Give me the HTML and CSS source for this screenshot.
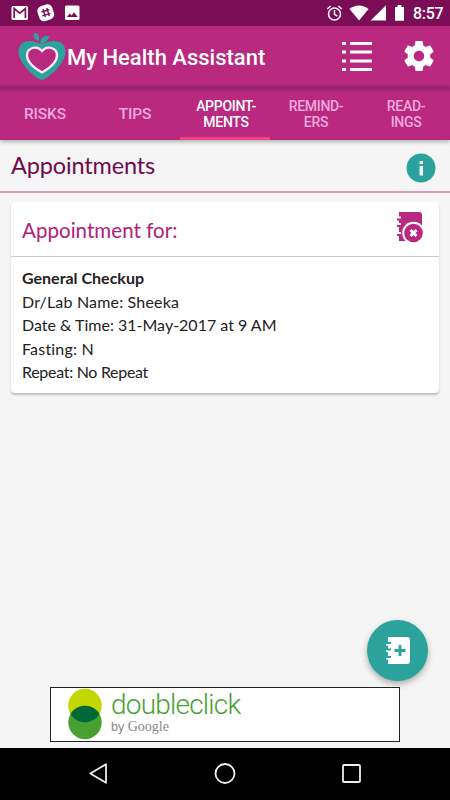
FILE: index.html
```html
<!DOCTYPE html>
<html lang="en">
<head>
<meta charset="utf-8">
<title>My Health Assistant</title>
<link rel="stylesheet" href="styles.css">
</head>
<body>
<div class="screen">
  <header class="status">
    <svg class="status-left" width="80" height="26" viewBox="0 0 80 26">
      <rect x="11.5" y="6" width="16.5" height="14" rx="1.5" fill="#fff"/>
      <path d="M14.2 18V8.5l5.6 4.6 5.6-4.6V18" fill="none" stroke="#7b0d57" stroke-width="1.7"/>
      <rect x="38" y="5" width="15.5" height="15.5" rx="5" fill="#fff" transform="rotate(-18 45.75 12.75)"/>
      <path d="M43 9l2.4 8M46.8 8l2.4 8M41.4 12l8-2.4M42.4 15.8l8-2.4" stroke="#7b0d57" stroke-width="1.4"/>
      <rect x="65" y="5.5" width="14.5" height="14.5" rx="1.5" fill="#fff"/>
      <path d="M67 17l2.8-3.5 1.8 2 2.4-3.2 3.7 4.7z" fill="#7b0d57"/>
    </svg>
    <div class="status-right">
      <svg width="80" height="26" viewBox="0 0 80 26">
        <circle cx="9.5" cy="14" r="6" fill="none" stroke="#fff" stroke-width="1.5"/>
        <path d="M9.500 10v4.300l3 1.800M2.200 9l3.400-3M16.800 9l-3.400-3" fill="none" stroke="#fff" stroke-width="1.400"/>
        <path d="M24.500 9c5.500-4.800 13.500-4.800 19 0L34 20.500z" fill="#fff"/>
        <path d="M61 5.200V20.500H45.700z" fill="#fff"/>
        <path d="M70 7h2.500V5h4v2H79v13.700h-9z" fill="#fff"/>
      </svg>
      <span class="clock">8:57</span>
    </div>
  </header>
  <div class="appbar">
    <svg class="logo" width="48" height="50" viewBox="0 0 48 50">
      <path d="M24 48C20 48 1 33 .5 20 .5 12 6 8.500 13 9c4 .3 7 2 11 3 4-1 7-2.700 11-3 7-.5 12.500 3 12.500 11C47 33 28 48 24 48z" fill="#2ba39c"/>
      <path d="M22 12C22.500 6 25 3.500 31 4 30.500 9 27 11.500 22 12zM20.500 9C16 7.500 14.500 4 16.500 .5c4 1 5.500 4.500 4 8.500z" fill="#2ba39c"/>
      <path d="M24 40.500C16 36 9 30.500 9 23.500c0-8 10-10.500 15-4.500 5-6 15-3.500 15 4.500 0 7-7 12.500-15 17z" fill="#b8297f" stroke="#fde6ff" stroke-width="2.300"/>
    </svg>
    <h1>My Health Assistant</h1>
    <svg class="list" width="30" height="31" viewBox="0 0 30 31" fill="#fff">
      <path d="M0 1h4v3H0zM8 1h22v3H8zM0 9.500h4v3H0zM8 9.500h22v3H8zM0 18.500h4v3H0zM8 18.500h22v3H8zM0 27h4v3H0zM8 27h22v3H8z"/>
    </svg>
    <svg class="gear" width="36" height="36" viewBox="0 0 24 24" fill="#fff">
      <path d="M19.430 12.980c.04-.32.070-.64.070-.98s-.03-.66-.07-.98l2.110-1.650c.19-.15.240-.42.120-.64l-2-3.460c-.12-.22-.39-.3-.61-.22l-2.490 1c-.52-.4-1.080-.73-1.690-.98l-.38-2.650C14.460 2.180 14.250 2 14 2h-4c-.25 0-.46.180-.49.420l-.38 2.650c-.61.250-1.170.590-1.690.980l-2.490-1c-.23-.09-.49 0-.61.220l-2 3.460c-.13.220-.07.490.120.640l2.110 1.650c-.04.320-.07.650-.07.980s.03.660.070.980l-2.110 1.650c-.19.150-.24.420-.12.640l2 3.460c.12.220.390.300.610.220l2.490-1c.52.400 1.080.730 1.690.980l.38 2.650c.03.240.240.420.490.420h4c.25 0 .46-.18.490-.42l.38-2.650c.61-.25 1.170-.59 1.690-.98l2.490 1c.23.090.49 0 .61-.22l2-3.460c.12-.22.070-.49-.12-.64l-2.110-1.650zM12 15.500c-1.930 0-3.500-1.570-3.500-3.500s1.570-3.500 3.500-3.500 3.500 1.570 3.500 3.500-1.570 3.500-3.500 3.500z"/>
    </svg>
  </div>
  <nav class="tabs">
    <div class="tab single">RISKS</div>
    <div class="tab single">TIPS</div>
    <div class="tab active">APPOINT-<br>MENTS</div>
    <div class="tab">REMIND-<br>ERS</div>
    <div class="tab">READ-<br>INGS</div>
  </nav>
  <div class="heading">
    <h2>Appointments</h2>
    <svg width="30" height="30" viewBox="0 0 30 30">
      <circle cx="15" cy="15" r="14.500" fill="#2ba39c"/>
      <path d="M13.600 8h3.400v3h-3.400zM13.600 13h3.400v9.500h-3.400z" fill="#fff"/>
    </svg>
  </div>
  <main class="content">
    <section class="card">
      <div class="card-head">
        <h3>Appointment for:</h3>
        <svg width="28" height="32" viewBox="0 0 28 32">
          <path d="M3 1h20q3 0 3 3v14H15v12H3v-5H1v-2h4v-2H3v-5H1v-2h4v-2H3V9.500H1v-2h4v-2H3z" fill="#b8297f"/>
          <circle cx="17.500" cy="22" r="11.300" fill="#fff"/>
          <circle cx="17.500" cy="22" r="9.300" fill="#b8297f"/>
          <path d="M14.500 19l6 6M20.500 19l-6 6" stroke="#fff" stroke-width="3"/>
        </svg>
      </div>
      <div class="details">
        <p class="l1">General Checkup</p>
        <p class="l2">Dr/Lab Name: Sheeka</p>
        <p class="l3">Date &amp; Time: 31-May-2017 at 9 AM</p>
        <p class="l4">Fasting: N</p>
        <p class="l5">Repeat: No Repeat</p>
      </div>
    </section>
    <div class="fab">
      <svg width="26" height="30" viewBox="0 0 26 30">
        <path d="M3 1h19q3 0 3 3v21q0 3-3 3H3v-4.500H1V22h5v-2H3v-4H1v-1.500h5v-2H3V9.500H1V8h5V6H3z" fill="#fff"/>
        <path d="M15 9v11M9.500 14.500h11" stroke="#2ba39c" stroke-width="2.800"/>
      </svg>
    </div>
    <div class="ad">
      <svg class="ad-logo" width="34" height="52" viewBox="0 0 34 52">
        <circle cx="17" cy="17.500" r="16.700" fill="#c3d600"/>
        <circle cx="17" cy="34.500" r="16.700" fill="#4a9f32"/>
        <path d="M2.600 26A16.700 16.700 0 0 1 31.400 26A16.700 16.700 0 0 1 2.600 26z" fill="#00693a"/>
      </svg>
      <div class="ad-text">
        <div class="brand">doubleclick</div>
        <div class="by">by <span>Google</span></div>
      </div>
    </div>
  </main>
  <footer class="navbar">
    <svg width="450" height="52" viewBox="0 0 450 52" fill="none" stroke="#eee" stroke-width="1.800">
      <path d="M106 16.200v18.600L90.300 25.500z" stroke-linejoin="round"/>
      <circle cx="225" cy="25.500" r="9.500"/>
      <rect x="343" y="17" width="17" height="17" rx="1"/>
    </svg>
  </footer>
</div>
</body>
</html>
```

FILE: styles.css
```css
* { box-sizing: border-box; }
body { margin: 0; }
h1, h2, h3, p { margin: 0; font-weight: 400; white-space: nowrap; }
svg { display: block; flex: none; }
.screen {
  width: 450px;
  height: 800px;
  display: flex;
  flex-direction: column;
  background: #f5f5f5;
  overflow: hidden;
  font-family: Roboto, sans-serif;
}
.status {
  height: 26px;
  flex: none;
  display: flex;
  justify-content: space-between;
  background: #7b0d57;
}
.status-right { display: flex; width: 125px; }
.clock {
  margin-left: 8px;
  color: #fff;
  font-size: 16px;
  font-weight: 500;
  line-height: 27px;
  letter-spacing: -.3px;
}
.appbar {
  height: 62px;
  flex: none;
  display: flex;
  align-items: flex-start;
  background: linear-gradient(#b8297f 58px, #98236f);
}
.logo { margin: 6px 0 0 18px; }
.appbar h1 {
  width: 200px;
  margin-left: 1px;
  color: #fff;
  font-size: 22px;
  font-weight: 500;
  line-height: 63px;
}
.list { margin: 15px 0 0 75px; }
.gear { margin: 12px 0 0 29px; }
.tabs {
  height: 52px;
  flex: none;
  display: grid;
  grid-template-columns: repeat(5, 90px);
  background: linear-gradient(#9c2370, #b8297f 5px);
  box-shadow: 0 2px 4px rgba(0, 0, 0, .28);
}
.tab {
  display: flex;
  align-items: center;
  justify-content: center;
  text-align: center;
  color: #f3a9dc;
  font-size: 14px;
  font-weight: 500;
  line-height: 16px;
  letter-spacing: -.3px;
  padding-left: 3px;
}
.tab:not(.single) { padding-left: 2px; }
.single { font-size: 15.500px; letter-spacing: -.1px; padding-left: 0; }
.active { color: #fff; border-bottom: 3px solid #f0437f; padding-top: 2px; }
.heading {
  height: 53px;
  flex: none;
  display: flex;
  justify-content: space-between;
  padding: 13px 14px 0 11px;
  border-bottom: 2px solid #c99dbd;
}
.heading h2 {
  font-family: Lato, sans-serif;
  font-size: 23.500px;
  line-height: 25px;
  letter-spacing: -.15px;
  color: #6f0a4e;
}
.content { flex: 1; display: flex; flex-direction: column; padding: 9px 11px 6px; }
.card {
  height: 191px;
  background: #fff;
  border-radius: 4px;
  box-shadow: 0 2px 2px rgba(0, 0, 0, .22);
}
.card-head {
  height: 55px;
  display: flex;
  justify-content: space-between;
  padding: 9px 15px 0 11px;
  border-bottom: 1px solid #ccc;
}
.card-head h3 {
  font-family: Lato, sans-serif;
  font-size: 20.500px;
  line-height: 39px;
  letter-spacing: .05px;
  color: #b0207a;
}
.details { padding: 9px 11px; font-family: Lato, sans-serif; color: #222; }
.details p { font-size: 16px; line-height: 23.600px; }
.details .l1 { font-weight: 700; }
.details .l2 { letter-spacing: .18px; }
.details .l4 { letter-spacing: .2px; }
.details .l5 { letter-spacing: -.3px; }
.fab {
  width: 61px;
  height: 61px;
  margin: auto 11px 6px auto;
  display: flex;
  align-items: center;
  justify-content: center;
  border-radius: 50%;
  background: #2ba39c;
  box-shadow: 0 3px 6px rgba(0, 0, 0, .3);
}
.ad {
  width: 350px;
  height: 55px;
  align-self: center;
  display: flex;
  padding-left: 17px;
  background: #fff;
  border: 1px solid #222;
}
.ad-text { margin-left: 9px; }
.brand {
  font-weight: 300;
  font-size: 28px;
  line-height: 33px;
  height: 32px;
  letter-spacing: -.8px;
  color: #4a9f32;
}
.by { font-family: "Liberation Sans", sans-serif; font-size: 12.500px; line-height: 13px; color: #888; }
.by span { font-family: "Liberation Serif", serif; font-size: 14px; }
.navbar { height: 52px; flex: none; background: #000; }
```
